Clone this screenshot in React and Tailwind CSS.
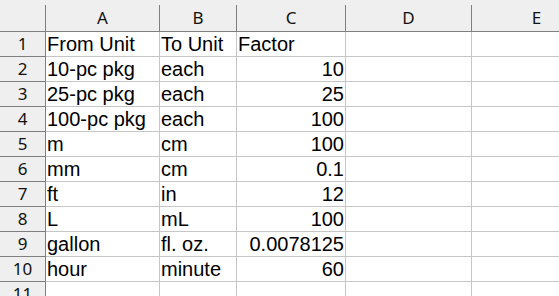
import React from 'react';

const columns = [
    { label: 'A', width: 'w-[114px]' },
    { label: 'B', width: 'w-[77px]' },
    { label: 'C', width: 'w-[109px]' },
    { label: 'D', width: 'w-[126px]' },
    { label: 'E', width: 'w-[130px]' },
];

const rows = [
    ['From Unit', 'To Unit', 'Factor'],
    ['10-pc pkg', 'each', 10],
    ['25-pc pkg', 'each', 25],
    ['100-pc pkg', 'each', 100],
    ['m', 'cm', 100],
    ['mm', 'cm', 0.1],
    ['ft', 'in', 12],
    ['L', 'mL', 100],
    ['gallon', 'fl. oz.', 0.0078125],
    ['hour', 'minute', 60],
    ['', '', ''],
];

const Cell = ({ value, width }) => {
    const isNumber = typeof value === 'number';
    return (
        <div
            className={`${width} shrink-0 h-[25px] border-r border-b border-[#c6c6c6] overflow-visible whitespace-nowrap leading-[24px] text-[20px] text-black ${isNumber ? 'text-right pr-px' : 'text-left pl-px'}`}
            style={{ fontFamily: '"Liberation Sans", Arial, sans-serif' }}
        >
            {isNumber ? String(value) : value}
        </div>
    );
};

const App = () => {
    return (
        <div className="w-[559px] h-[296px] overflow-hidden bg-white">
            {/* Column headers */}
            <div
                className="flex h-[32px] bg-[#efefef] border-b border-[#7f7f7f] text-[17px] text-[#111111]"
                style={{ fontFamily: '"Noto Sans", "Open Sans", sans-serif' }}
            >
                <div className="w-[46px] shrink-0 mt-[5px] h-[26px] border-r border-[#7f7f7f]"></div>
                {columns.map((c) => (
                    <div
                        key={c.label}
                        className={`${c.width} shrink-0 mt-[5px] h-[26px] border-r border-[#7f7f7f] flex items-center justify-center`}
                    >
                        {c.label}
                    </div>
                ))}
            </div>

            {rows.map((r, i) => (
                <div key={i} className="flex">
                    <div
                        className="w-[46px] shrink-0 h-[25px] bg-[#efefef] border-r border-b border-[#7f7f7f] flex items-center justify-center text-[17px] text-[#111111]"
                        style={{ fontFamily: '"Noto Sans", "Open Sans", sans-serif' }}
                    >
                        {i + 1}
                    </div>
                    <Cell value={r[0]} width={columns[0].width} />
                    <Cell value={r[1]} width={columns[1].width} />
                    <Cell value={r[2]} width={columns[2].width} />
                    <Cell value="" width={columns[3].width} />
                    <Cell value="" width={columns[4].width} />
                </div>
            ))}
        </div>
    );
};

export default App;
